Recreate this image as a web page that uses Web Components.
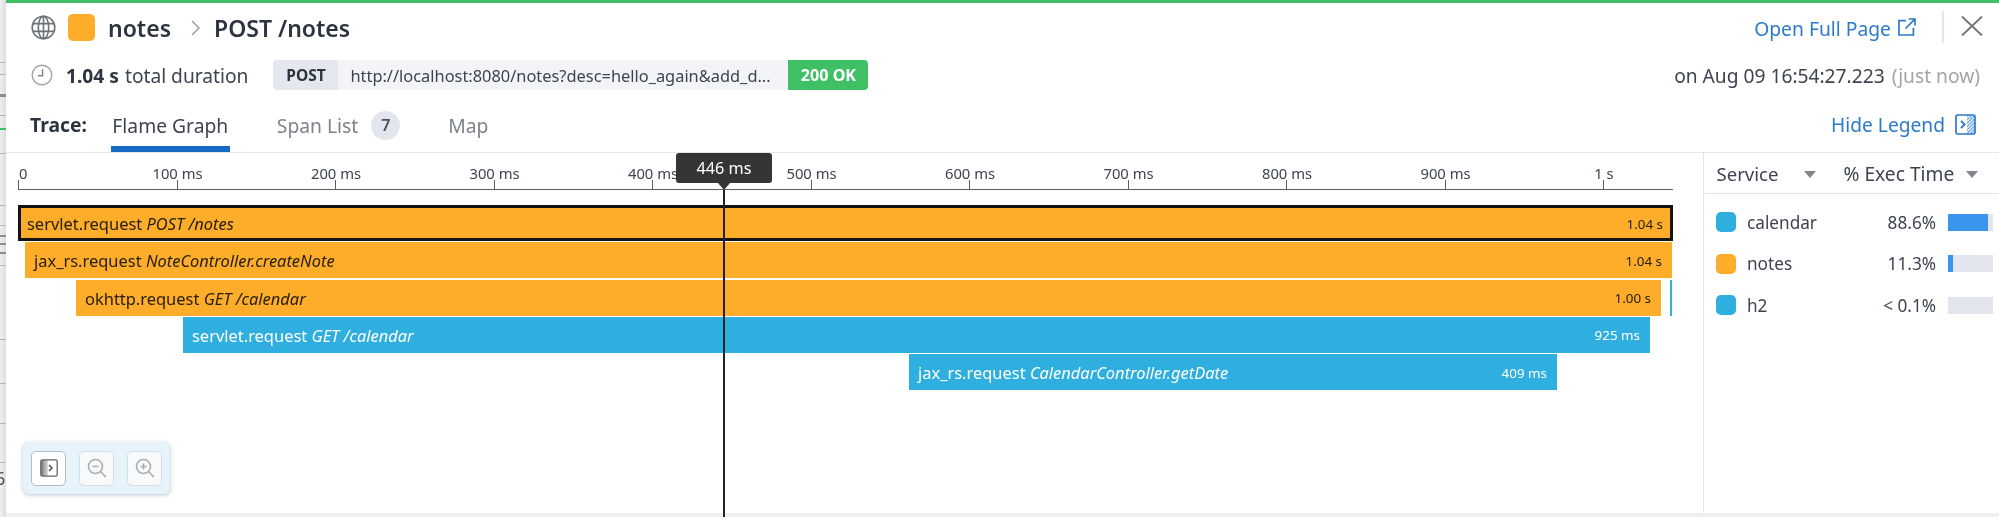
<!DOCTYPE html>
<html lang="en"><head><meta charset="utf-8"><title>Trace</title>
<style>
html,body{margin:0;padding:0;height:100%;background:#fff}
body{width:1999px;height:517px;overflow:hidden;font-family:"Noto Sans","Open Sans",sans-serif;color:#3d4450}
</style></head><body>
<trace-panel></trace-panel>
<script>
function def(name,html,init){
  customElements.define(name,class extends HTMLElement{
    connectedCallback(){
      if(this.shadowRoot)return;
      const r=this.attachShadow({mode:'open'});
      r.innerHTML=typeof html==='function'?html(this):html;
      if(init)init(this,r);
    }
  });
}
const ICON={
 globe:'<svg width="25" height="25" viewBox="0 0 25 25" fill="none" stroke="#6c7378" stroke-width="1.6"><circle cx="12.5" cy="12.5" r="11.3"/><ellipse cx="12.5" cy="12.5" rx="5.2" ry="11.3"/><path d="M12.5 1.2v22.6M2.2 8.6h20.6M2.2 16.4h20.6"/></svg>',
 clock:'<svg width="22" height="22" viewBox="0 0 22 22" fill="none" stroke="#a2a6ab" stroke-width="1.4"><circle cx="11" cy="11" r="9.8"/><path d="M11.6 5.2v6.6H6.8" stroke="#7d8287"/></svg>',
 ext:'<svg width="18" height="18" viewBox="0 0 18 18" fill="none" stroke="#2a7bcb" stroke-width="1.7"><path d="M8 2.6H1v14.4h14.4V10"/><path d="M10.6 1h6.4v6.4M16.6 1.4L7.5 10.5"/></svg>',
 x:'<svg width="22" height="20" viewBox="0 0 22 20" fill="none" stroke="#6d7175" stroke-width="1.8"><path d="M1 .5l20 19M21 .5L1 19.5"/></svg>',
 legend:'<svg width="21" height="21" viewBox="0 0 21 21" fill="none"><defs><pattern id="g" width="2.4" height="2.4" patternUnits="userSpaceOnUse" patternTransform="rotate(45)"><rect width="1.3" height="2.4" fill="#2a7bcb" fill-opacity=".7"/></pattern></defs><rect x="12" y="1" width="8" height="19" fill="url(#g)"/><rect x="1" y="1" width="19" height="19" rx="1.5" stroke="#2a7bcb" stroke-width="1.7"/><path d="M6 7l3.6 3.5L6 14" stroke="#2a7bcb" stroke-width="1.8"/></svg>',
 panel:'<svg width="18" height="18" viewBox="0 0 18 18" fill="none"><defs><linearGradient id="h"><stop offset="0" stop-color="#777"/><stop offset="1" stop-color="#ddd"/></linearGradient></defs><rect x="1" y="1" width="7" height="16" fill="url(#h)"/><rect x=".8" y=".8" width="16.4" height="16.4" rx="1.4" stroke="#60666c" stroke-width="1.3"/><path d="M9 6l3 3-3 3" stroke="#50565c" stroke-width="1.6"/></svg>',
 minus:'<svg width="20" height="20" viewBox="0 0 20 20" fill="none" stroke="#a9adb1" stroke-width="1.6"><circle cx="8.5" cy="8.5" r="7"/><path d="M13.5 13.5l5.5 5.5M5.5 8.5h6"/></svg>',
 plus:'<svg width="20" height="20" viewBox="0 0 20 20" fill="none" stroke="#a9adb1" stroke-width="1.6"><circle cx="8.5" cy="8.5" r="7"/><path d="M13.5 13.5l5.5 5.5M5.5 8.5h6M8.5 5.5v6"/></svg>'
};
def('ui-icon',h=>`<style>:host{display:inline-flex;flex:none;align-items:center;justify-content:center}svg{display:block}</style>${ICON[h.getAttribute('name')]}`);

def('title-bar',`<style>
:host{display:flex;align-items:center;height:50px;padding:0 16px 0 25px;flex:none;box-sizing:border-box}
.sq{width:27px;height:27px;border-radius:5px;background:#fdad2a;margin:-2px 13px 0 12px;flex:none}
.t{font-size:23px;font-weight:600;color:#2b3440;line-height:30px}
.sep{margin:0 14px 0 20px;flex:none;display:block}
.sp{flex:1}
a{color:#2a7bcb;font-size:19.3px;display:flex;align-items:center;gap:7px}
a ui-icon{margin-top:-3px}
.div{width:2px;height:32px;background:#e3e6ec;margin:-2px 17px 0 26px}
.x{margin-top:-5px}
</style>
<ui-icon name="globe" style="margin-top:-2px"></ui-icon><span class="sq"></span><span class="t">notes</span>
<svg class="sep" width="9" height="16" viewBox="0 0 9 16" fill="none" stroke="#9a9ea3" stroke-width="1.5"><path d="M1 1l7 7-7 7"/></svg>
<span class="t">POST /notes</span><span class="sp"></span>
<a>Open Full Page <ui-icon name="ext"></ui-icon></a><span class="div"></span><ui-icon class="x" name="x"></ui-icon>`);

def('meta-bar',`<style>
:host{display:flex;align-items:center;height:44px;padding:0 19px 0 25px;flex:none;box-sizing:border-box;font-size:19.2px;color:#3d4450}
b{font-weight:700;color:#2b3440;margin-left:13px;margin-right:6px}
.tag{display:flex;height:30px;margin-left:25px;align-items:stretch}
.m{background:#e4e7ee;border-radius:4px 0 0 4px;font-weight:700;display:flex;align-items:center;color:#2b3440;width:65px;justify-content:center;font-size:15.5px}
.u{background:#f3f4f7;width:450px;padding-left:12px;box-sizing:border-box;display:flex;align-items:center;white-space:nowrap;font-size:16.4px}
.s{background:#3fc064;color:#fff;font-weight:700;width:80px;border-radius:0 4px 4px 0;display:flex;align-items:center;justify-content:center;font-size:16.1px}
.sp{flex:1}.g{color:#a1a5aa;margin-left:7px}
</style>
<ui-icon name="clock"></ui-icon><b>1.04 s</b>total duration
<div class="tag"><span class="m">POST</span><span class="u">http://localhost:8080/notes?desc=hello_again&amp;add_d...</span><span class="s">200 OK</span></div>
<span class="sp"></span><span>on Aug 09 16:54:27.223</span><span class="g">(just now)</span>`);

def('tab-bar',`<style>
:host{display:flex;align-items:stretch;height:56px;padding:0 23px 0 24px;flex:none;box-sizing:border-box;font-size:19.3px;color:#7d838a;border-bottom:1px solid #e3e6ec}
.tr{font-weight:700;color:#2b3440;align-self:center;margin-right:24px}
.tab{display:flex;align-items:center;padding:10px 1px 3px;box-sizing:border-box;border-bottom:6px solid transparent;white-space:nowrap}
.on{color:#3d4450;border-bottom-color:#1669c4;width:119px;justify-content:center;margin-right:46px;padding:10px 0 3px}
.n{width:29px;height:29px;border-radius:50%;background:#e3e6ee;color:#4b525b;display:inline-flex;align-items:center;justify-content:center;font-size:16px;font-weight:600;margin-left:13px}
.sp{flex:1}
.hl{display:flex;align-items:center;gap:10px;color:#2a7bcb;font-size:19.2px}
</style>
<span class="tr">Trace:</span><span class="tab on">Flame Graph</span><span class="tab" style="margin-right:46px">Span List<span class="n">7</span></span><span class="tab">Map</span>
<span class="sp"></span><span class="hl">Hide Legend <ui-icon name="legend"></ui-icon></span>`);

def('time-ruler',`<style>
:host{display:block;height:37px;flex:none;box-sizing:border-box;padding-left:18px;width:1673px}
.r{display:flex;height:36px;border-bottom:1.5px solid #596069}
.c{width:158.5px;flex:none;position:relative;box-sizing:border-box;border-left:1.5px solid #596069;height:9px;margin-top:27px}
.c span{position:absolute;left:0;top:-18px;font-size:14.8px;color:#3d4450;white-space:nowrap;line-height:22px;transform:translateX(-50%)}
.c.first span{transform:none}
.last{width:70px}
</style><div class="r" id="r"></div>`,(h,r)=>{
  const labs=['0','100 ms','200 ms','300 ms','400 ms','500 ms','600 ms','700 ms','800 ms','900 ms','1 s'];
  r.getElementById('r').innerHTML=labs.map((l,i)=>`<div class="c${i==0?' first':''}${i==10?' last':''}"><span>${l}</span></div>`).join('');
});

def('flame-bar',h=>{
  const start=+h.getAttribute('start'),end=+h.getAttribute('end'),c=h.getAttribute('color');
  return `<style>
:host{display:flex;align-items:center;justify-content:space-between;box-sizing:border-box;height:36px;margin-left:${start}px;width:${end-start}px;background:${c=='o'?'#fdad2a':'#2eafe0'};color:${c=='o'?'#2a2008':'#fff'};padding:1px 10px 0 9px;flex:none;${h.hasAttribute('sel')?'outline:3.5px solid #15130f;outline-offset:-3.5px;':''}}
.n{font-size:16.45px;white-space:nowrap}
.d{font-size:13.4px;white-space:nowrap}
</style><span class="n"><slot></slot></span><span class="d">${h.getAttribute('dur')}</span>`;
});

def('flame-graph',`<style>
:host{display:block;flex:1;position:relative;min-width:0}
.rows{display:flex;flex-direction:column;gap:1.25px;margin-top:15px;position:relative;width:1673px}
.cur{position:absolute;left:723px;top:37px;bottom:-4px;width:2px;background:#202226}
.tip{position:absolute;left:676px;top:0;width:96px;height:30px;background:#353535;color:#fff;border-radius:3px;font-size:16.2px;display:flex;align-items:center;justify-content:center}
.tip:after{content:"";position:absolute;left:42px;top:30px;border:6px solid transparent;border-top:7px solid #353535;border-bottom:0}
.sl{position:absolute;left:1670px;top:74.5px;width:2px;height:36px;background:#2eafe0}
</style>
<time-ruler></time-ruler>
<div class="rows"><slot></slot><span class="sl"></span></div>
<div class="cur"></div><div class="tip">446 ms</div>
<zoom-controls></zoom-controls>`);

def('zoom-controls',`<style>
:host{position:absolute;left:23px;top:289px;width:147px;height:52px;box-sizing:border-box;background:#e6f3fa;border-radius:6px;box-shadow:0 1px 4px rgba(90,110,130,.4);display:flex;gap:13px;align-items:center;justify-content:center}
.b{width:35px;height:35px;box-sizing:border-box;border-radius:5px;background:#f7f9fb;border:1px solid #d8dde5;display:flex;align-items:center;justify-content:center}
.a{background:#fff;border:1.5px solid #b3bac6}
</style><span class="b a"><ui-icon name="panel"></ui-icon></span><span class="b"><ui-icon name="minus"></ui-icon></span><span class="b"><ui-icon name="plus"></ui-icon></span>`);

def('legend-row',h=>{
  const c=h.getAttribute('c'),f=+h.getAttribute('fill');
  return `<style>
:host{display:flex;align-items:center;height:41.5px;padding-left:12px;font-size:17.2px;color:#3d4450}
.d{width:20px;height:20px;border-radius:5px;background:${c};flex:none;margin-right:11px}
.n{width:100px;flex:none}
.p{width:89px;text-align:right;flex:none}
.t{width:45px;height:17px;background:#e2e5ed;margin-left:12px;flex:none;display:flex}
.f{background:#3a95ed;width:${f}px}
</style><span class="d"></span><span class="n"><slot></slot></span><span class="p">${h.getAttribute('pct')}</span><span class="t"><span class="f"></span></span>`;
});

def('legend-panel',`<style>
:host{display:block;width:296px;flex:none;border-left:1.5px solid #e3e6ec;box-sizing:border-box}
.h{display:flex;align-items:center;height:41px;border-bottom:1.5px solid #e3e6ec;padding-left:12.5px;font-size:18.6px;color:#3d4450;box-sizing:border-box}
.car{width:0;height:0;border:6.5px solid transparent;border-top:7px solid #80868d;border-bottom:0;flex:none;margin-top:2px}
.l{padding-top:7.5px}
</style><div class="h"><span style="width:87.5px">Service</span><span class="car"></span><span style="width:116px;margin-left:27.5px;white-space:nowrap;font-size:19.2px">% Exec Time</span><span class="car" style="margin-left:6.5px"></span></div>
<div class="l"><slot></slot></div>`);

def('side-strip',`<style>
:host{display:block;width:6px;flex:none;height:517px;overflow:hidden;background:linear-gradient(90deg,#efeff0,#dddddf);font-size:18px;color:#4a4e54;position:relative;z-index:0}
i{display:block;height:1px;background:#b4b7bb;position:absolute;left:0;right:0}
.g{background:#3fc064;height:2px}
.d{background:#8a8d91;height:3px}
span{position:absolute;left:-5px;top:466px;line-height:24px}
</style>
<i style="top:62px"></i><i style="top:74px"></i><i class="d" style="top:94px"></i><i style="top:115px"></i><i class="g" style="top:128px"></i><i style="top:153px"></i>
<i style="top:205px"></i><i style="top:225px"></i><i class="d" style="top:235px;height:2px"></i><i class="d" style="top:243px;height:2px"></i><i class="d" style="top:252px;height:2px"></i><i style="top:265px"></i><i style="top:339px"></i><i style="top:383px"></i><i style="top:423px"></i><i style="top:462px"></i><span>6</span>`);

def('trace-panel',`<style>
:host{display:flex;height:517px;width:1999px;background:#fff;position:relative;filter:blur(.35px)}
.main{flex:1;display:flex;flex-direction:column;min-width:0;border-top:3px solid #3fc064;position:relative}
.body{flex:1;display:flex;min-height:0;margin-left:-6px}
.foot{height:4px;background:#eeeff0;flex:none}
</style>
<side-strip></side-strip>
<div class="main">
<title-bar></title-bar><meta-bar></meta-bar><tab-bar></tab-bar>
<div class="body"><flame-graph>
<flame-bar start="18" end="1673" color="o" dur="1.04 s" sel>servlet.request <i>POST /notes</i></flame-bar>
<flame-bar start="25" end="1672" color="o" dur="1.04 s">jax_rs.request <i>NoteController.createNote</i></flame-bar>
<flame-bar start="76" end="1661" color="o" dur="1.00 s">okhttp.request <i>GET /calendar</i></flame-bar>
<flame-bar start="183" end="1650" color="b" dur="925 ms">servlet.request <i>GET /calendar</i></flame-bar>
<flame-bar start="909" end="1557" color="b" dur="409 ms">jax_rs.request <i>CalendarController.getDate</i></flame-bar>
</flame-graph>
<legend-panel>
<legend-row c="#2eafe0" pct="88.6%" fill="40">calendar</legend-row>
<legend-row c="#fdad2a" pct="11.3%" fill="5">notes</legend-row>
<legend-row c="#2eafe0" pct="&lt; 0.1%" fill="0">h2</legend-row>
</legend-panel></div>
<div class="foot"></div>
</div>`);
</script>
</body></html>
